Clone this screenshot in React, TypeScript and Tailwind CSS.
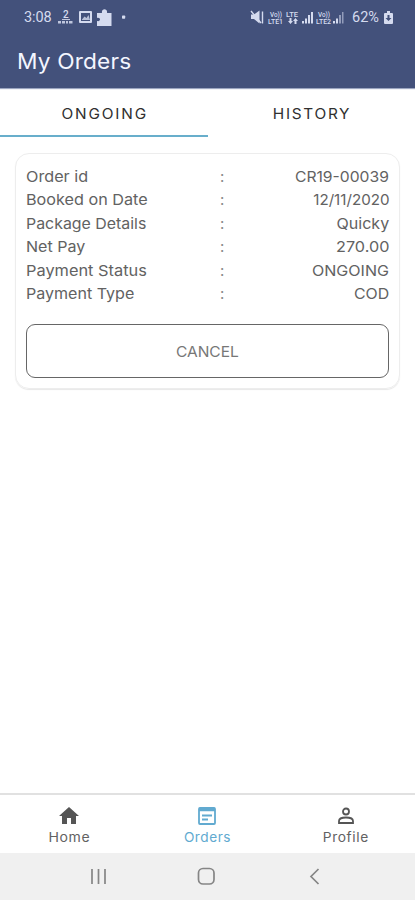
import React from "react";

type Row = { label: string; value: string; labelClass: string; valueClass: string };

const rows: Row[] = [
  { label: "Order id", value: "CR19-00039", labelClass: "scale-x-[1.08]", valueClass: "scale-x-[1.045]" },
  { label: "Booked on Date", value: "12/11/2020", labelClass: "scale-x-[1.08]", valueClass: "scale-x-[1.01]" },
  { label: "Package Details", value: "Quicky", labelClass: "scale-x-[1.06]", valueClass: "scale-x-[1.07]" },
  { label: "Net Pay", value: "270.00", labelClass: "scale-x-[1.07]", valueClass: "scale-x-[1.08]" },
  { label: "Payment Status", value: "ONGOING", labelClass: "scale-x-[1.09]", valueClass: "scale-x-[1.07]" },
  { label: "Payment Type", value: "COD", labelClass: "scale-x-[1.07]", valueClass: "scale-x-[1.06]" },
];

function LeftStatus() {
  return (
    <svg width="74" height="18" viewBox="58 8 74 18" className="ml-[5px] shrink-0" fill="#d5dbef">
      <text x="63" y="17" fontSize="10" fontWeight="500" fontFamily="Roboto, sans-serif">2</text>
      <path d="M58 20h3v2.500h-3zM62 18h8v1h-8zM62 20h3v2.500h-3zM66 20h2v2.500h-2zM69 20h3.500v2.500H69z" opacity=".85" />
      <path fillRule="evenodd" d="M80 10h11q1 0 1 1v10q0 1-1 1H80q-1 0-1-1V11q0-1 1-1zm1 2v8h9v-8z" />
      <path d="M82 18.500l2.500-3 2 1.500 2-3 1.500 5h-8z" opacity=".8" />
      <path d="M97 12h5c-1-5 6-5 5 0h4.500v13H97v-5c4 1 4-4 0-3z" />
      <rect x="122" y="14.500" width="3.200" height="3.200" rx=".7" />
    </svg>
  );
}

function RightStatus() {
  return (
    <svg width="94" height="18" viewBox="249 8 94 18" className="shrink-0" fill="#d5dbef">
      <path d="M250 13.500h3l5.500-4v13l-5.500-4.500h-3z" />
      <path d="M250 10l10 12M261.500 10.500v12" fill="none" stroke="#d5dbef" strokeWidth="1.400" />
      <g fontFamily="Roboto, sans-serif" fontSize="6.500" fontWeight="500">
        <text x="269" y="16" textLength="12" lengthAdjust="spacingAndGlyphs">Vo))</text>
        <text x="267" y="22.500" textLength="15" lengthAdjust="spacingAndGlyphs">LTE1</text>
        <text x="285" y="15.500" textLength="12" lengthAdjust="spacingAndGlyphs">LTE</text>
        <text x="317" y="16" textLength="12" lengthAdjust="spacingAndGlyphs">Vo))</text>
        <text x="315" y="22.500" textLength="15" lengthAdjust="spacingAndGlyphs">LTE2</text>
      </g>
      <path d="M287 20l2.500 3 2.500-3h-1.500v-3h-2v3zM292 20l2.500-3 2.500 3h-1.500v3h-2v-3z" />
      <path d="M301 20h2v2.500h-2zM304 17.500h2v5h-2zM307 14h2v8.500h-2zM310 11h2v11.500h-2zM332 20h2v2.500h-2zM335 17.500h2v5h-2z" />
      <path d="M338 14h2v8.500h-2zM341 11h1.500v11.500H341z" opacity=".55" />
    </svg>
  );
}

export default function App() {
  return (
    <main className="flex h-[900px] w-[415px] flex-col overflow-hidden bg-white font-[Inter,sans-serif] text-[#626262]">
      <header className="flex h-[89px] shrink-0 flex-col border-b border-[#9ba5c0] bg-[#43517b]">
        <div className="flex h-[35px] items-center pl-6 font-[Roboto,sans-serif] text-[14.5px] text-[#d5dbef]">
          <span className="w-[29px] whitespace-nowrap tracking-[-0.1px]">3:08</span>
          <LeftStatus />
          <div className="ml-auto flex items-center pr-[22px]">
            <RightStatus />
            <span className="ml-[8px] w-[29px] whitespace-nowrap">62%</span>
            <svg width="9" height="13" viewBox="0 0 9 13" className="ml-[3px]">
              <path d="M3 0h3v2h2q1 0 1 1v9q0 1-1 1H1q-1 0-1-1V3q0-1 1-1h2z" fill="#d5dbef" />
              <path d="M3.500 4h2v3h2l-3 3-3-3h2z" fill="#43517b" />
            </svg>
          </div>
        </div>
        <h1 className="ml-[17px] mt-[11px] origin-left scale-x-[1.08] text-[21px] leading-8 tracking-[0.15px] text-[#f4f6ff]">My Orders</h1>
      </header>

      <nav className="grid h-[48px] shrink-0 grid-cols-2 border-t border-[#f0f1f6] text-center text-[14.5px] leading-[47px] text-[#303030]">
        <div className="h-[47px] border-b-2 border-[#68aecb] tracking-[1.7px]"><span className="inline-block translate-x-px scale-x-[1.06]">ONGOING</span></div>
        <div className="tracking-[1.6px]"><span className="inline-block translate-x-px scale-x-[1.06]">HISTORY</span></div>
      </nav>

      <section className="mx-[15px] mt-[16px] h-[236px] shrink-0 rounded-[14px] border border-[#ededed] px-[10px] pt-[11px] shadow-[0_1px_1px_#e8e8e8]">
        {rows.map((row) => (
          <div key={row.label} className="flex h-[23.5px] items-center whitespace-nowrap text-[15px]">
            <span className="w-[194px]"><span className={"inline-block origin-left " + row.labelClass}>{row.label}</span></span>
            <span className="w-2 text-[#888]">:</span>
            <span className={"ml-auto inline-block origin-right " + row.valueClass}>{row.value}</span>
          </div>
        ))}
        <button className="mt-[18px] h-[54px] w-full rounded-[9px] border border-[#666] pt-[2px] text-[14.5px] text-[#777]"><span className="inline-block scale-x-[1.07]">CANCEL</span></button>
      </section>

      <footer className="mt-auto shrink-0">
        <div className="grid h-[60px] grid-cols-3 border-t-2 border-[#e1e1e1] bg-white text-[13px]">
          <div className="flex flex-col items-center pt-[9px]">
            <svg width="24" height="24" viewBox="0 0 24 24" fill="#555"><path d="M10 20v-6h4v6h5v-8h3L12 3 2 12h3v8z" /></svg>
            <span className="scale-x-[1.08] leading-[18px] tracking-[0.6px]">Home</span>
          </div>
          <div className="flex flex-col items-center pt-[9px] text-[#61aad0]">
            <svg width="24" height="24" viewBox="0 0 24 24" fill="none" stroke="currentColor" strokeWidth="1.800">
              <rect x="4" y="4" width="16" height="16" rx="1" /><path d="M4 5.500h16" strokeWidth="3.500" /><path d="M7 11.500h10M7 15.500h6" />
            </svg>
            <span className="scale-x-[1.05] leading-[18px] tracking-[0.5px]">Orders</span>
          </div>
          <div className="flex flex-col items-center pt-[9px]">
            <svg width="24" height="24" viewBox="0 0 24 24" fill="none" stroke="#555" strokeWidth="1.800">
              <circle cx="12" cy="7.500" r="3" /><path d="M5 19v-2c0-4.700 14-4.700 14 0v2z" />
            </svg>
            <span className="scale-x-[1.06] leading-[18px] tracking-[0.6px]">Profile</span>
          </div>
        </div>
        <div className="h-[47px] bg-[#f0f0f0]">
          <svg width="415" height="47" fill="none" stroke="#858585" strokeWidth="1.700">
            <path d="M92 16v15M98.500 16v15M105 16v15" />
            <rect x="198.500" y="15.500" width="15.500" height="15.500" rx="4.500" />
            <path d="M318.500 16l-7.500 7.500 7.500 7.500" />
          </svg>
        </div>
      </footer>
    </main>
  );
}
